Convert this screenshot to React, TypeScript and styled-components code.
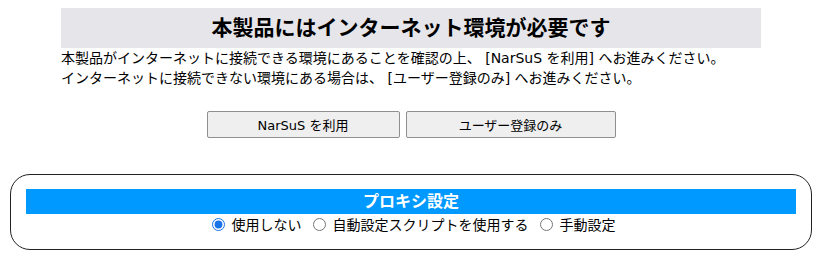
import React from "react";
import styled, { createGlobalStyle } from "styled-components";

const FONT = `"DejaVu Sans", "Noto Sans CJK JP", sans-serif`;

const Global = createGlobalStyle`
  html, body { margin: 0; padding: 0; background: #fff; }
  body {
    font-family: ${FONT};
    color: #000;
    text-spacing-trim: space-all;
  }
`;

const Page = styled.div`
  width: 822px;
  padding-top: 8px;
  padding-bottom: 9px;
`;

const Main = styled.div`
  width: 700px;
  margin: 0 auto;
`;

const Title = styled.h2`
  margin: 0;
  height: 40px;
  line-height: 40px;
  background: #e5e5ea;
  text-align: center;
  font-size: 21px;
  font-weight: 700;
`;

const Notice = styled.p`
  margin: 0;
  font-size: 14px;
  line-height: 20px;
`;

const ButtonRow = styled.div`
  display: flex;
  justify-content: center;
  gap: 6px;
  margin-top: 23px;
`;

const ActionButton = styled.button<{ $w: number }>`
  width: ${(p) => p.$w}px;
  height: 27px;
  background: #efefef;
  border: 1px solid #8f8f8f;
  border-radius: 2px;
  font-family: ${FONT};
  font-size: 13px;
  color: #000;
  padding: 0;
`;

const ProxyBox = styled.fieldset`
  margin: 36px 10px 0;
  padding: 14px 15px 15px;
  border: 1px solid #222;
  border-radius: 20px;
  min-width: 0;
`;

const ProxyHeader = styled.div`
  height: 25px;
  line-height: 25px;
  background: #0099ff;
  color: #fff;
  font-weight: 700;
  font-size: 16px;
  text-align: center;
`;

const RadioRow = styled.div`
  display: flex;
  justify-content: center;
  align-items: center;
  height: 20px;
  font-size: 14px;
`;

const RadioLabel = styled.label`
  display: inline-flex;
  align-items: center;
  margin-right: 6px;

  &:last-child {
    margin-right: 0;
  }
`;

const Radio = styled.input`
  width: 13px;
  height: 13px;
  margin: 0 7px 0 5px;
  accent-color: #1a73e8;
`;

export default function App() {
  return (
    <>
      <Global />
      <Page>
        <Main>
          <Title>本製品にはインターネット環境が必要です</Title>
          <Notice>
            本製品がインターネットに接続できる環境にあることを確認の上、 [NarSuS を利用] へお進みください。
            <br />
            インターネットに接続できない環境にある場合は、 [ユーザー登録のみ] へお進みください。
          </Notice>
        </Main>
        <ButtonRow>
          <ActionButton $w={193}>NarSuS を利用</ActionButton>
          <ActionButton $w={210}>ユーザー登録のみ</ActionButton>
        </ButtonRow>
        <ProxyBox>
          <ProxyHeader>プロキシ設定</ProxyHeader>
          <RadioRow>
            <RadioLabel>
              <Radio type="radio" name="proxy" defaultChecked />
              使用しない
            </RadioLabel>
            <RadioLabel>
              <Radio type="radio" name="proxy" />
              自動設定スクリプトを使用する
            </RadioLabel>
            <RadioLabel>
              <Radio type="radio" name="proxy" />
              手動設定
            </RadioLabel>
          </RadioRow>
        </ProxyBox>
      </Page>
    </>
  );
}
